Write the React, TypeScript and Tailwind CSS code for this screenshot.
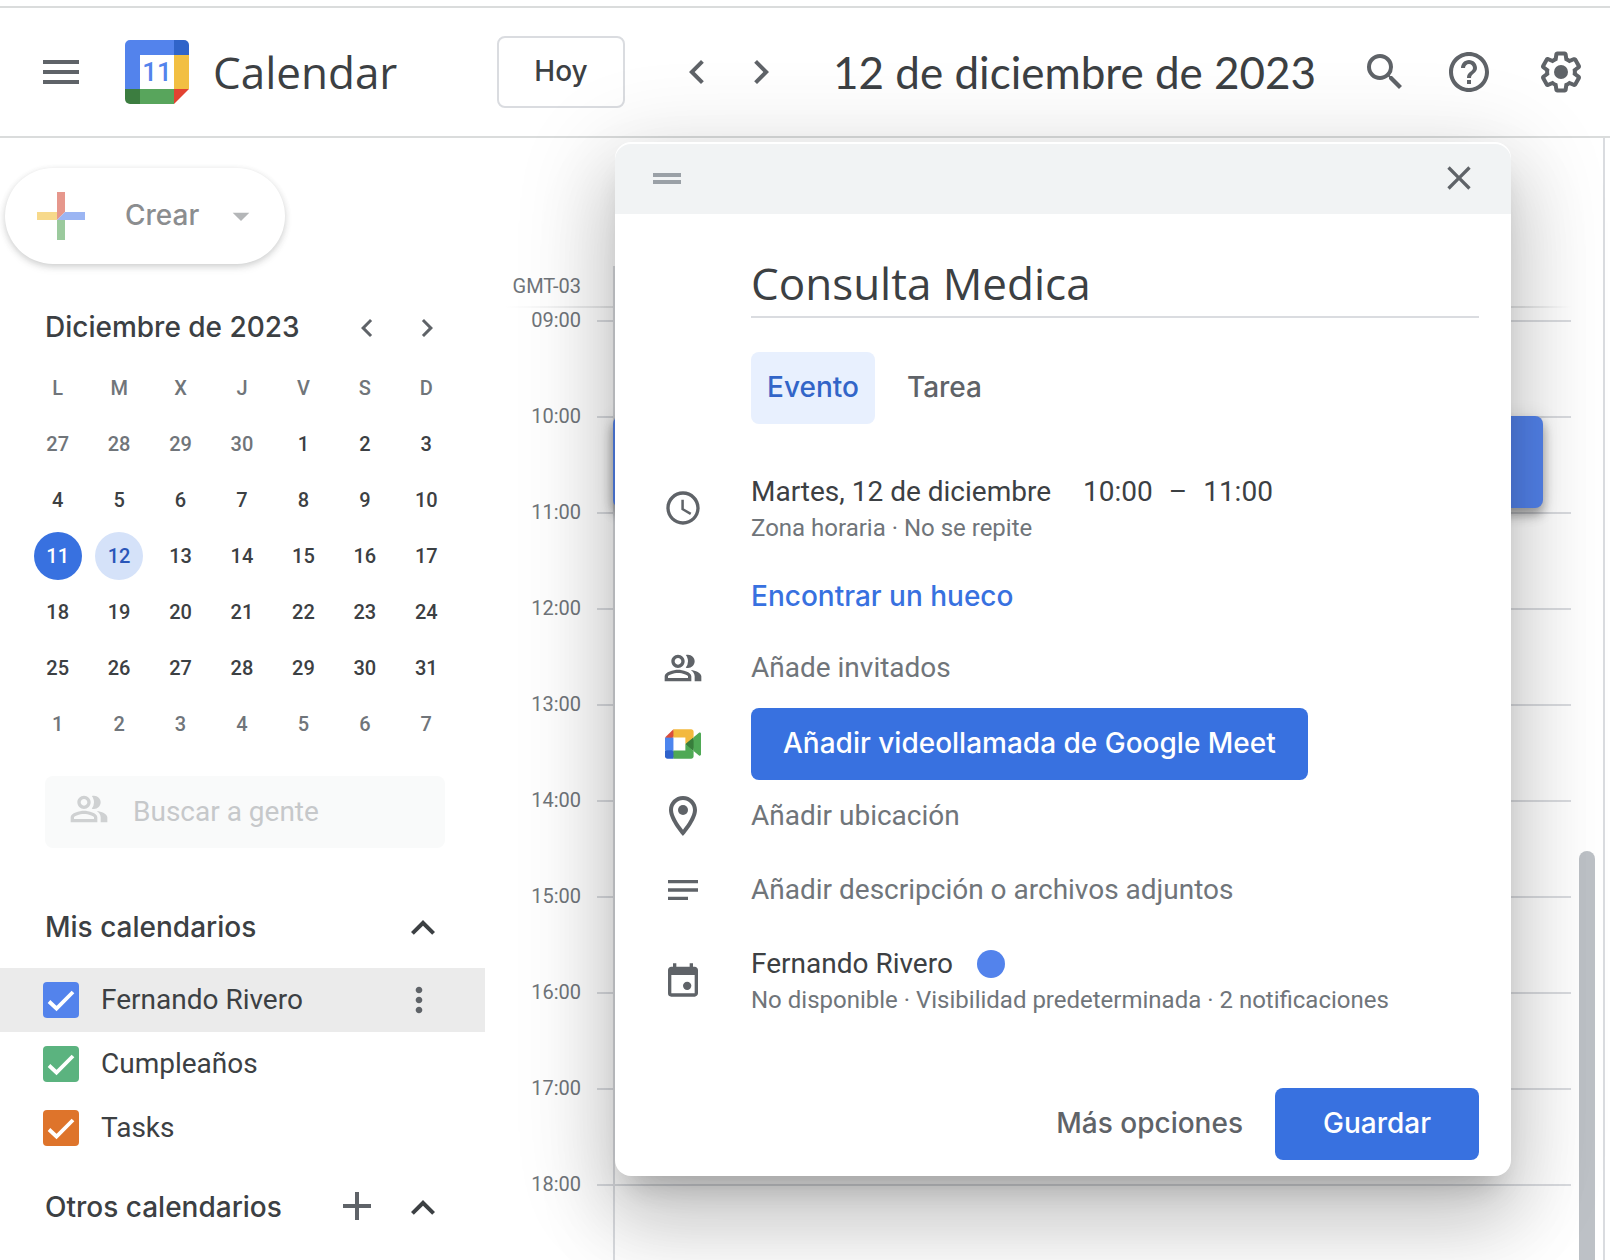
import React, { useState } from "react";
import {
  MdAccessTime,
  MdAdd,
  MdArrowDropDown,
  MdChevronLeft,
  MdChevronRight,
  MdClose,
  MdExpandLess,
  MdHelpOutline,
  MdMenu,
  MdMoreVert,
  MdNotes,
  MdSearch,
} from "react-icons/md";

const weekdays = ["L", "M", "X", "J", "V", "S", "D"];

const weeks = [
  [27, 28, 29, 30, 1, 2, 3],
  [4, 5, 6, 7, 8, 9, 10],
  [11, 12, 13, 14, 15, 16, 17],
  [18, 19, 20, 21, 22, 23, 24],
  [25, 26, 27, 28, 29, 30, 31],
  [1, 2, 3, 4, 5, 6, 7],
];

const hours = ["09:00", "10:00", "11:00", "12:00", "13:00", "14:00", "15:00", "16:00", "17:00", "18:00"];

const calendars = [
  { id: "fernando", name: "Fernando Rivero", color: "bg-[#5383ec]", active: true },
  { id: "cumple", name: "Cumpleaños", color: "bg-[#5bb37f]", active: false },
  { id: "tasks", name: "Tasks", color: "bg-[#de742b]", active: false },
];

const CalendarLogo = () => (
  <svg viewBox="0 0 64 64" className="h-16 w-16">
    <path fill="#fff" d="M15 15h34v34H15z" />
    <path fill="#5383ec" d="M5 0h44v15H15v34H0V5a5 5 0 0 1 5-5z" />
    <path fill="#3064c9" d="M49 0h10a5 5 0 0 1 5 5v10H49z" />
    <path fill="#f2bf42" d="M49 15h15v34H49z" />
    <path fill="#58a55c" d="M15 49h34v15H15z" />
    <path fill="#3c7d40" d="M0 49h15v15H5a5 5 0 0 1-5-5z" />
    <path fill="#e24231" d="M49 49h15L49 64z" />
    <text x="32" y="41" textAnchor="middle" fontSize="26" fontFamily="Roboto, sans-serif" fontWeight="500" fill="#5383ec">
      11
    </text>
  </svg>
);

const MeetLogo = () => (
  <svg viewBox="0 0 87.5 72" className="h-[30px] w-9">
    <path fill="#387e3c" d="M49.5 36l8.53 9.75 11.47 7.33 2-17.02-2-16.64-11.69 6.44z" />
    <path fill="#2f62cb" d="M0 51.5V66c0 3.315 2.685 6 6 6h14.5l3-10.96-3-9.54-9.95-3z" />
    <path fill="#d94d3d" d="M20.5 0L0 20.5l10.55 3 9.95-3 2.95-9.41z" />
    <path fill="#4c85ee" d="M20.5 20.5H0v31h20.5z" />
    <path
      fill="#4fa955"
      d="M82.6 8.68L69.5 19.42v33.66l13.16 10.79c1.97 1.54 4.85.135 4.85-2.37V11c0-2.535-2.945-3.925-4.91-2.32zM49.5 36v15.5h-29V72h43c3.315 0 6-2.685 6-6V53.08z"
    />
    <path fill="#f3b93e" d="M63.5 0h-43v20.5h29V36l20-16.57V6c0-3.315-2.685-6-6-6z" />
  </svg>
);

const PeopleIcon = ({ className }: { className?: string }) => (
  <svg viewBox="0 0 24 24" fill="currentColor" className={className}>
    <path d="M15 8c0-1.42-.5-2.73-1.33-3.76.42-.14.86-.24 1.33-.24 2.21 0 4 1.79 4 4s-1.79 4-4 4c-.43 0-.84-.09-1.23-.21-.03-.01-.06-.02-.1-.03A5.98 5.98 0 0 0 15 8zm1.66 5.13C18.03 14.06 19 15.32 19 17v3h4v-3c0-2.18-3.58-3.47-6.34-3.87zM9 6c-1.1 0-2 .9-2 2s.9 2 2 2 2-.9 2-2-.9-2-2-2m0 9c-2.7 0-5.8 1.29-6 2.01V18h12v-1c-.2-.71-3.3-2-6-2M9 4c2.21 0 4 1.79 4 4s-1.79 4-4 4-4-1.79-4-4 1.79-4 4-4zm0 9c2.67 0 8 1.34 8 4v3H1v-3c0-2.66 5.33-4 8-4z" />
  </svg>
);

const SettingsIcon = () => (
  <svg viewBox="0 0 24 24" fill="currentColor" className="h-12 w-12">
    <path d="M13.85 22.25h-3.7c-.74 0-1.36-.54-1.45-1.27l-.27-1.89c-.27-.14-.53-.29-.79-.46l-1.8.72c-.7.26-1.47-.03-1.81-.65L2.2 15.53c-.35-.66-.2-1.44.36-1.88l1.53-1.19c-.01-.15-.02-.3-.02-.46 0-.15.01-.31.02-.46l-1.52-1.19c-.59-.45-.74-1.26-.37-1.88l1.85-3.19c.34-.62 1.11-.9 1.79-.63l1.81.73c.26-.17.52-.32.78-.46l.27-1.91c.09-.7.71-1.25 1.44-1.25h3.7c.74 0 1.36.54 1.45 1.27l.27 1.89c.27.14.53.29.79.46l1.8-.72c.71-.26 1.48.03 1.82.65l1.84 3.18c.36.66.2 1.44-.36 1.88l-1.52 1.19c.01.15.02.3.02.46s-.01.31-.02.46l1.52 1.19c.56.45.72 1.23.37 1.86l-1.86 3.22c-.34.62-1.11.9-1.8.63l-1.8-.72c-.26.17-.52.32-.78.46l-.27 1.91c-.1.68-.72 1.22-1.46 1.22zm-3.23-2h2.76l.37-2.55.53-.22c.44-.18.88-.44 1.34-.78l.45-.34 2.38.96 1.38-2.4-2.03-1.58.07-.56c.03-.26.06-.51.06-.78s-.03-.53-.06-.78l-.07-.56 2.03-1.58-1.39-2.4-2.39.96-.45-.35c-.42-.32-.87-.58-1.33-.77l-.52-.22-.37-2.55h-2.76l-.37 2.55-.53.21c-.44.19-.88.44-1.34.79l-.45.33-2.38-.95-1.39 2.39 2.03 1.58-.07.56a7 7 0 0 0-.06.79c0 .26.02.53.06.78l.07.56-2.03 1.58 1.38 2.4 2.39-.96.45.35c.43.33.86.58 1.33.77l.53.22.38 2.55z" />
    <circle cx="12" cy="12" r="3.5" />
  </svg>
);

const PlaceIcon = () => (
  <svg viewBox="0 0 24 24" fill="currentColor" className="h-12 w-12">
    <path d="M12 2C8.14 2 5 5.14 5 9c0 5.25 7 13 7 13s7-7.75 7-13c0-3.86-3.14-7-7-7zm0 2c2.76 0 5 2.24 5 5 0 2.88-2.88 7.19-5 9.88C9.92 16.21 7 11.85 7 9c0-2.76 2.24-5 5-5z" />
    <circle cx="12" cy="9" r="2.5" />
  </svg>
);

const EventIcon = () => (
  <svg viewBox="0 0 24 24" fill="currentColor" className="h-10 w-10">
    <path d="M19 4h-1V2h-2v2H8V2H6v2H5c-1.11 0-1.99.9-1.99 2L3 20a2 2 0 0 0 2 2h14c1.1 0 2-.9 2-2V6c0-1.1-.9-2-2-2zm0 16H5V9h14v11z" />
    <circle cx="14.5" cy="15.5" r="2.5" />
  </svg>
);

const Header = () => (
  <header className="flex h-[132px] shrink-0 items-center border-y-2 border-[#dadcdc] pr-[25px] text-[#3c4043]">
    <div className="flex w-[497px] shrink-0 items-center pl-[37px]">
      <button aria-label="Menú principal" className="text-[#5f6368]">
        <MdMenu className="h-12 w-12" />
      </button>
      <a href="#inicio" className="ml-10 flex items-center gap-6">
        <CalendarLogo />
        <span className="font-[Open_Sans,sans-serif] text-[44px] leading-[56px]">Calendar</span>
      </a>
    </div>
    <button className="h-[72px] w-32 shrink-0 rounded-lg border-2 border-[#dadce0] pb-[2px] font-[Inter,sans-serif] text-[28px] font-medium">
      Hoy
    </button>
    <div className="ml-12 flex shrink-0 gap-4 text-[#5f6368]">
      <button aria-label="Día anterior">
        <MdChevronLeft className="h-12 w-12" />
      </button>
      <button aria-label="Día siguiente">
        <MdChevronRight className="h-12 w-12" />
      </button>
    </div>
    <h1 className="ml-12 font-[Lato,sans-serif] text-[44px] leading-[56px] whitespace-nowrap">12 de diciembre de 2023</h1>
    <div className="ml-auto flex shrink-0 text-[#5f6368]">
      <button aria-label="Buscar">
        <MdSearch className="h-12 w-12" />
      </button>
      <button aria-label="Ayuda" className="ml-9">
        <MdHelpOutline className="h-12 w-12" />
      </button>
      <button aria-label="Configuración" className="ml-11">
        <SettingsIcon />
      </button>
    </div>
  </header>
);

const dayClass = (week: number, day: number) => {
  if (week === 2 && day === 11) return "bg-[#3871e0] text-white";
  if (week === 2 && day === 12) return "bg-[#d5e2f9] text-[#2a56b9]";
  if ((week === 0 && day > 20) || week === 5) return "text-[#70757a]";
  return "text-[#3c4043]";
};

const MiniCalendar = () => (
  <section className="mt-10">
    <div className="flex h-12 items-center pr-[34px] pl-[45px]">
      <h2 className="flex-1 pb-[2px] font-[Inter,sans-serif] text-[28px] font-medium">Diciembre de 2023</h2>
      <div className="flex gap-3 text-[#5f6368]">
        <button aria-label="Mes anterior" className="flex h-12 w-12 items-center justify-center">
          <MdChevronLeft className="h-9 w-9" />
        </button>
        <button aria-label="Mes siguiente" className="flex h-12 w-12 items-center justify-center">
          <MdChevronRight className="h-9 w-9" />
        </button>
      </div>
    </div>
    <table className="mt-2 ml-[27px] w-[430px] table-fixed text-xl font-medium">
      <thead>
        <tr className="h-14 text-[#70757a]">
          {weekdays.map((day) => (
            <th key={day} className="p-0 font-medium">
              {day}
            </th>
          ))}
        </tr>
      </thead>
      <tbody>
        {weeks.map((week, i) => (
          <tr key={i} className="h-14">
            {week.map((day) => (
              <td key={day} className="p-0 text-center">
                <button className={`h-12 w-12 rounded-full align-middle ${dayClass(i, day)}`}>{day}</button>
              </td>
            ))}
          </tr>
        ))}
      </tbody>
    </table>
  </section>
);

const Sidebar = () => {
  const [checked, setChecked] = useState<Record<string, boolean>>({ fernando: true, cumple: true, tasks: true });

  return (
    <aside className="w-[485px] shrink-0 pt-[30px] text-[#3c4043]">
      <button className="ml-[5px] flex h-24 w-[280px] items-center rounded-full bg-white pr-6 pl-8 shadow-[0_2px_6px_rgba(60,64,67,0.2),0_4px_8px_rgba(60,64,67,0.08)]">
        <svg viewBox="0 0 48 48" className="h-12 w-12">
          <path fill="#e6978c" d="M20 0h8v20l-8 8z" />
          <path fill="#f7d98b" d="M0 20h20v8H0z" />
          <path fill="#9bb5f3" d="M28 20h20v8H20z" />
          <path fill="#9bca9d" d="M20 28h8v20h-8z" />
        </svg>
        <span className="ml-10 pb-[2px] font-[Inter,sans-serif] text-[28px] font-medium text-[#8b8d8f]">Crear</span>
        <MdArrowDropDown className="ml-auto h-10 w-10 text-[#b4b6b8]" />
      </button>

      <MiniCalendar />

      <label className="mt-6 ml-[45px] flex h-[72px] w-[400px] items-center rounded-lg bg-[#f9fafa] pl-6">
        <PeopleIcon className="mb-[6px] h-10 w-10 text-[#cfd1d2]" />
        <input
          type="text"
          aria-label="Buscar a gente"
          placeholder="Buscar a gente"
          className="ml-6 min-w-0 flex-1 bg-transparent text-[28px] outline-none placeholder:text-[#c6c8ca]"
        />
      </label>

      <div className="mt-14 flex h-12 items-center pr-[38px] pl-[45px]">
        <h2 className="flex-1 pb-[2px] font-[Inter,sans-serif] text-[28px] font-medium">Mis calendarios</h2>
        <button aria-label="Contraer mis calendarios">
          <MdExpandLess className="h-12 w-12" />
        </button>
      </div>
      <ul className="mt-4">
        {calendars.map((cal) => (
          <li key={cal.id} className={`flex h-16 items-center pr-[42px] pl-[43px] ${cal.active ? "bg-[#ebebeb]" : ""}`}>
            <label className="flex flex-1 items-center gap-[22px] text-[28px]">
              <span className="grid h-9 w-9 place-items-center">
                <input
                  type="checkbox"
                  checked={checked[cal.id]}
                  onChange={() => setChecked({ ...checked, [cal.id]: !checked[cal.id] })}
                  className={`col-start-1 row-start-1 h-9 w-9 appearance-none rounded ${cal.color}`}
                />
                {checked[cal.id] && (
                  <svg viewBox="0 0 36 36" className="pointer-events-none z-10 col-start-1 row-start-1 h-9 w-9">
                    <path d="M6 19.5l7.5 7L30 10" fill="none" stroke="#fff" strokeWidth="3.8" />
                  </svg>
                )}
              </span>
              {cal.name}
            </label>
            {cal.active && (
              <button aria-label={`Opciones de ${cal.name}`} className="flex w-12 justify-center text-[#5f6368]">
                <MdMoreVert className="h-10 w-10" />
              </button>
            )}
          </li>
        ))}
      </ul>

      <div className="mt-6 flex h-12 items-center pr-[38px] pl-[45px]">
        <h2 className="flex-1 pb-[2px] font-[Inter,sans-serif] text-[28px] font-medium">Otros calendarios</h2>
        <button aria-label="Añadir otros calendarios" className="mr-[18px] pb-1 text-[#5f6368]">
          <MdAdd className="h-12 w-12" />
        </button>
        <button aria-label="Contraer otros calendarios">
          <MdExpandLess className="h-12 w-12" />
        </button>
      </div>
    </aside>
  );
};

const DayView = () => (
  <main className="flex min-w-0 flex-1">
    <div className="w-32 shrink-0 text-xl text-[#70757a]">
      <div className="flex h-[168px] items-end justify-end pr-8 pb-[6px]">GMT-03</div>
      <div className="ml-5 h-[2px] bg-linear-to-r from-transparent to-[#e4e5e6]" />
      {hours.map((hour) => (
        <div key={hour} className="flex h-24 justify-end gap-4">
          <span className="leading-6">{hour}</span>
          <span className="mt-3 h-[2px] w-4 bg-[#dadce0]" />
        </div>
      ))}
    </div>
    <div className="flex-1 pt-32">
      <div className="relative h-full border-l-2 border-[#dadce0]">
        <div className="h-10" />
        <div className="h-[2px] bg-linear-to-r from-[#e4e5e6] from-95% to-transparent" />
        {hours.map((hour) => (
          <div key={hour} className="h-24 pt-3">
            <div className="h-[2px] bg-[#dadce0]" />
          </div>
        ))}
        {/* 10:00 - 11:00 */}
        <div className="absolute top-[150px] right-7 -left-[2px] h-[92px] rounded-lg bg-[#5383ec] shadow-[0_6px_10px_rgba(0,0,0,0.14),0_2px_20px_rgba(0,0,0,0.12),0_8px_12px_rgba(0,0,0,0.2)]" />
      </div>
    </div>
    <div className="mr-[5px] w-[34px] shrink-0 border-r-2 border-[#dadce0] pt-[713px] pl-2">
      <div className="h-full w-4 rounded-t-full bg-[#bdc1c6]" />
    </div>
  </main>
);

const Row = ({ icon, children, className = "" }: { icon?: React.ReactNode; children: React.ReactNode; className?: string }) => (
  <div className={`flex min-h-[72px] items-center ${className}`}>
    <div className="flex w-[136px] shrink-0 justify-center text-[#5f6368]">{icon}</div>
    <div className="min-w-0 flex-1">{children}</div>
  </div>
);

const EventDialog = () => {
  const [title, setTitle] = useState("Consulta Medica");

  return (
    <div
      role="dialog"
      aria-label="Crear evento"
      className="absolute top-[142px] right-[99px] w-[896px] overflow-hidden rounded-2xl bg-white pt-[2px] pb-4 text-[28px] text-[#3c4043] shadow-[0_48px_76px_6px_rgba(0,0,0,0.14),0_18px_92px_16px_rgba(0,0,0,0.12),0_22px_30px_-14px_rgba(0,0,0,0.2)]"
    >
      <div className="flex h-[70px] items-center justify-between rounded-t-2xl bg-[#f1f3f4] pr-8 pb-[2px] pl-[38px]">
        <svg viewBox="0 0 28 11" className="h-[11px] w-7">
          <path fill="#9aa0a6" d="M0 0h28v4H0zM0 7h28v4H0z" />
        </svg>
        <button aria-label="Cerrar" className="text-[#5f6368]">
          <MdClose className="h-10 w-10" />
        </button>
      </div>

      <div className="mt-10 pr-8 pl-[136px]">
        <input
          type="text"
          aria-label="Título"
          value={title}
          onChange={(e) => setTitle(e.target.value)}
          className="h-16 w-full border-b-2 border-[#dadce0] pb-1 font-[Open_Sans,sans-serif] text-[44px] outline-none"
        />
        <div className="mt-[34px] flex gap-4 font-[Inter,sans-serif] font-medium">
          <button className="h-[72px] rounded-lg bg-[#e8f0fe] px-4 pb-[2px] text-[#3265c8]">Evento</button>
          <button className="h-[72px] rounded-lg px-4 pb-[2px] text-[#5f6368]">Tarea</button>
        </div>
      </div>

      <Row className="mt-[46px]" icon={<MdAccessTime className="h-10 w-10" />}>
        <button className="block pt-1 text-left">
          <span className="flex leading-9">
            Martes, 12 de diciembre
            <span className="ml-8">10:00</span>
            <span className="mx-4">–</span>
            <span>11:00</span>
          </span>
          <span className="block text-2xl leading-9 text-[#70757a]">Zona horaria · No se repite</span>
        </button>
      </Row>
      <Row className="mt-[14px]">
        <button className="font-[Inter,sans-serif] font-medium text-[#3871e0]">Encontrar un hueco</button>
      </Row>
      <Row icon={<PeopleIcon className="h-10 w-10" />}>
        <button className="text-[#70757a]">Añade invitados</button>
      </Row>
      <Row className="mt-1" icon={<MeetLogo />}>
        <button className="block h-[72px] rounded-lg bg-[#3871e0] px-8 pb-[2px] font-[Inter,sans-serif] font-medium text-white">
          Añadir videollamada de Google Meet
        </button>
      </Row>
      <Row icon={<PlaceIcon />}>
        <button className="text-[#70757a]">Añadir ubicación</button>
      </Row>
      <Row className="mt-[2px]" icon={<MdNotes className="h-10 w-10" />}>
        <button className="text-[#70757a]">Añadir descripción o archivos adjuntos</button>
      </Row>
      <Row className="mt-4" icon={<EventIcon />}>
        <button className="block pt-1 text-left">
          <span className="flex items-center gap-6 leading-9">
            Fernando Rivero
            <span className="h-7 w-7 rounded-full bg-[#5383ec]" />
          </span>
          <span className="block text-2xl leading-9 text-[#70757a]">
            No disponible · Visibilidad predeterminada · 2 notificaciones
          </span>
        </button>
      </Row>

      <div className="mt-[70px] flex justify-end gap-4 pr-8 font-[Inter,sans-serif] font-medium">
        <button className="h-[72px] rounded-lg px-4 pb-[2px] text-[#5f6368]">Más opciones</button>
        <button className="h-[72px] rounded-lg bg-[#3871e0] px-12 pb-[2px] text-white">Guardar</button>
      </div>
    </div>
  );
};

const App = () => {
  return (
    <div className="relative flex h-screen flex-col overflow-hidden bg-white pt-[6px] font-[Roboto,sans-serif]">
      <Header />
      <div className="flex min-h-0 flex-1">
        <Sidebar />
        <DayView />
      </div>
      <EventDialog />
    </div>
  );
};

export default App;
